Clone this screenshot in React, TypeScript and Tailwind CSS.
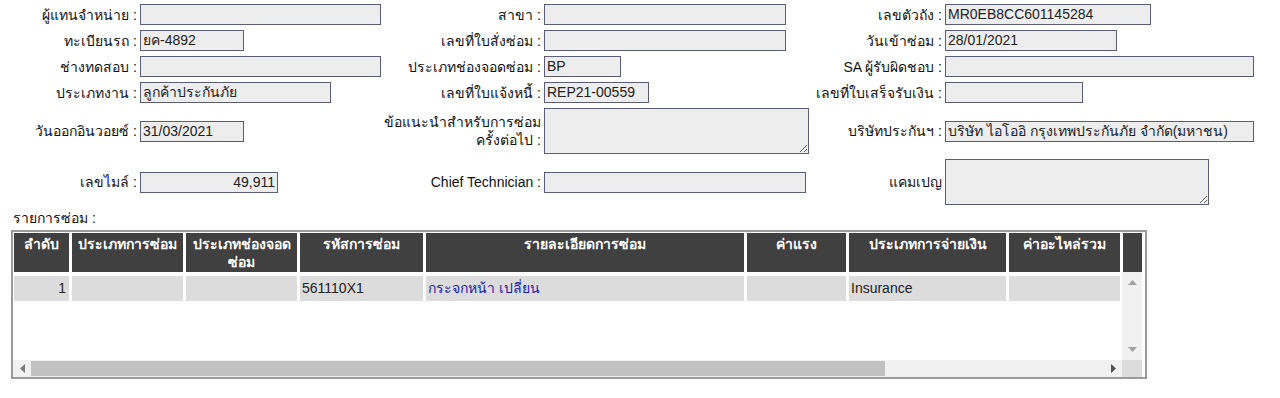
import React from 'react';

interface FieldProps {
  value?: string;
  width: string;
  right?: boolean;
}

const Field: React.FC<FieldProps> = ({ value = '', width, right }) => (
  <input
    readOnly
    value={value}
    className={`${width} block h-[21px] border border-[#5b5d78] bg-[#ededed] px-[2px] text-[14px] text-[#222] outline-none ${right ? 'text-right' : ''}`}
  />
);

const Area: React.FC<{ width: string }> = ({ width }) => (
  <textarea
    readOnly
    className={`${width} block h-[46px] border border-[#5b5d78] bg-[#ededed] outline-none`}
  />
);

const Label: React.FC<{ children: React.ReactNode }> = ({ children }) => (
  <div className="text-right whitespace-nowrap pr-[3px] text-[14px] leading-[18px] text-[#111]">{children}</div>
);

const columns = [
  { w: 'w-[55px]', title: 'ลำดับ' },
  { w: 'w-[111px]', title: 'ประเภทการซ่อม' },
  { w: 'w-[111px]', title: <>ประเภทช่องจอด<br />ซ่อม</> },
  { w: 'w-[123px]', title: 'รหัสการซ่อม' },
  { w: 'w-[318px]', title: 'รายละเอียดการซ่อม' },
  { w: 'w-[99px]', title: 'ค่าแรง' },
  { w: 'w-[157px]', title: 'ประเภทการจ่ายเงิน' },
  { w: 'w-[111px]', title: 'ค่าอะไหล่รวม' },
  { w: 'w-[19px]', title: '' },
];

const App: React.FC = () => {
  return (
    <div className="w-[1280px] h-[398px] bg-white overflow-hidden font-['Liberation_Sans',sans-serif]">
      {/* ฟอร์มข้อมูล */}
      <div className="grid grid-cols-[140px_244px_160px_271px_130px_1fr] gap-y-[5px] items-center pt-[4px]">
        <Label>ผู้แทนจำหน่าย :</Label>
        <Field width="w-[241px]" />
        <Label>สาขา :</Label>
        <Field width="w-[242px]" />
        <Label>เลขตัวถัง :</Label>
        <Field width="w-[206px]" value="MR0EB8CC601145284" />

        <Label>ทะเบียนรถ :</Label>
        <Field width="w-[104px]" value="ยค-4892" />
        <Label>เลขที่ใบสั่งซ่อม :</Label>
        <Field width="w-[242px]" />
        <Label>วันเข้าซ่อม :</Label>
        <Field width="w-[172px]" value="28/01/2021" />

        <Label>ช่างทดสอบ :</Label>
        <Field width="w-[241px]" />
        <Label>ประเภทช่องจอดซ่อม :</Label>
        <Field width="w-[77px]" value="BP" />
        <Label>SA ผู้รับผิดชอบ :</Label>
        <Field width="w-[309px]" />

        <Label>ประเภทงาน :</Label>
        <Field width="w-[191px]" value="ลูกค้าประกันภัย" />
        <Label>เลขที่ใบแจ้งหนี้ :</Label>
        <Field width="w-[105px]" value="REP21-00559" />
        <Label>เลขที่ใบเสร็จรับเงิน :</Label>
        <Field width="w-[138px]" />

        <Label>วันออกอินวอยซ์ :</Label>
        <Field width="w-[104px]" value="31/03/2021" />
        <Label>ข้อแนะนำสำหรับการซ่อม<br />ครั้งต่อไป :</Label>
        <Area width="w-[265px]" />
        <Label>บริษัทประกันฯ :</Label>
        <Field width="w-[309px]" value="บริษัท ไอโออิ กรุงเทพประกันภัย จำกัด(มหาชน)" />

        <Label>เลขไมล์ :</Label>
        <Field width="w-[138px]" value="49,911" right />
        <Label>Chief Technician :</Label>
        <Field width="w-[262px]" />
        <Label>แคมเปญ</Label>
        <Area width="w-[264px]" />
      </div>

      <div className="pl-[13px] pt-[5px] text-[14px] leading-[16px] text-[#111]">รายการซ่อม :</div>

      {/* ตารางรายการซ่อม */}
      <div className="ml-[11px] mt-[4px] w-[1136px] h-[149px] border-2 border-[#9a9a9a] flex flex-col">
        <div className="flex gap-[3px] pl-px pt-px">
          {columns.map((c, i) => (
            <div
              key={i}
              className={`${c.w} h-[39px] shrink-0 bg-[#404040] text-white font-bold text-[14px] leading-[18px] text-center pt-[2px]`}
            >
              {c.title}
            </div>
          ))}
        </div>
        <div className="flex flex-1">
          <div className="flex-1 pl-px pt-[4px]">
            <div className="flex gap-[3px] text-[14px] text-[#222]">
              <div className="w-[55px] h-[25px] bg-[#dcdcdc] flex items-center justify-end pr-[3px]">1</div>
              <div className="w-[111px] h-[25px] bg-[#dcdcdc]" />
              <div className="w-[111px] h-[25px] bg-[#dcdcdc]" />
              <div className="w-[123px] h-[25px] bg-[#dcdcdc] flex items-center pl-[2px]">561110X1</div>
              <div className="w-[318px] h-[25px] bg-[#dcdcdc] flex items-center pl-[2px] text-[#1c1ca8]">กระจกหน้า เปลี่ยน</div>
              <div className="w-[99px] h-[25px] bg-[#dcdcdc]" />
              <div className="w-[157px] h-[25px] bg-[#dcdcdc] flex items-center pl-[2px]">Insurance</div>
              <div className="w-[111px] h-[25px] bg-[#dcdcdc]" />
            </div>
          </div>
          {/* แถบเลื่อนแนวตั้ง */}
          <div className="w-[20px] mr-[3px] bg-[#f1f1f1] flex flex-col items-center justify-between py-[8px]">
            <svg width="9" height="5" viewBox="0 0 9 5"><path d="M0 5 L4.5 0 L9 5 Z" fill="#a3a3a3" /></svg>
            <svg width="9" height="5" viewBox="0 0 9 5"><path d="M0 0 L4.5 5 L9 0 Z" fill="#a3a3a3" /></svg>
          </div>
        </div>
        {/* แถบเลื่อนแนวนอน */}
        <div className="flex h-[17px]">
          <div className="flex-1 bg-[#f1f1f1] flex items-center">
            <div className="w-[18px] flex justify-center">
              <svg width="5" height="9" viewBox="0 0 5 9"><path d="M5 0 L0 4.5 L5 9 Z" fill="#7a7a7a" /></svg>
            </div>
            <div className="w-[854px] h-[15px] bg-[#c1c1c1]" />
            <div className="flex-1" />
            <div className="w-[18px] flex justify-center">
              <svg width="5" height="9" viewBox="0 0 5 9"><path d="M0 0 L5 4.5 L0 9 Z" fill="#505050" /></svg>
            </div>
          </div>
          <div className="w-[20px] mr-[3px] bg-[#dcdcdc]" />
        </div>
      </div>
    </div>
  );
};

export default App;
